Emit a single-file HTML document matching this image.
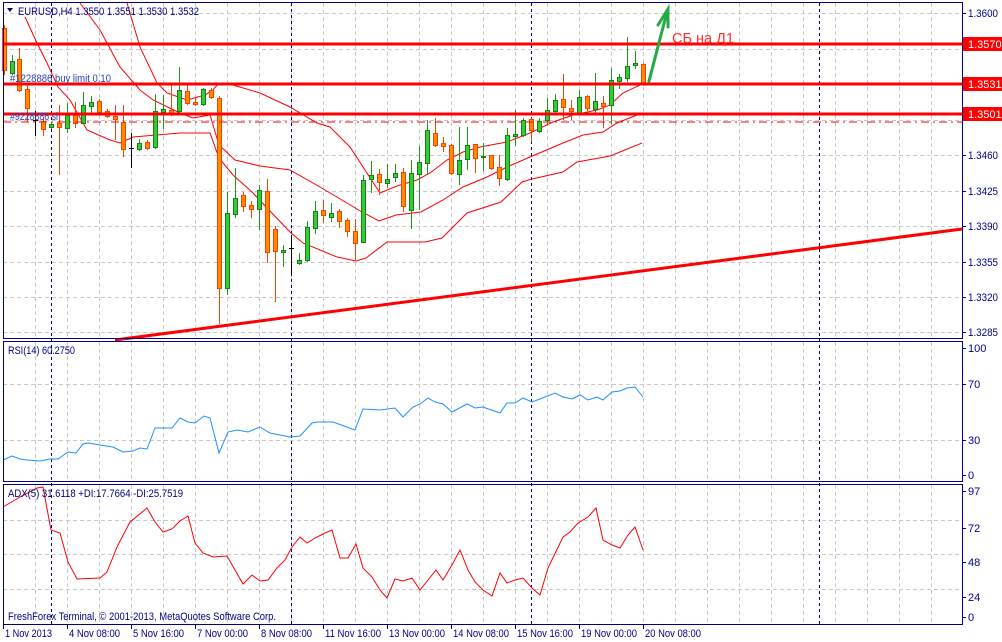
<!DOCTYPE html>
<html><head><meta charset="utf-8"><style>
html,body{margin:0;padding:0;background:#fff;}
svg{display:block;font-family:"Liberation Sans",sans-serif;}
</style></head><body>
<svg id="s" width="1002" height="642" xmlns="http://www.w3.org/2000/svg">
<rect width="1002" height="642" fill="#fff"/>
<g id="grid" stroke="#c8c8c8" stroke-width="1" stroke-dasharray="4,3"></g>
<g id="days" stroke="#000080" stroke-width="1" stroke-dasharray="3,3"></g>
<g fill="none" stroke="#ff0000" stroke-width="1">
<polyline points="127,3 140,47 157,83 167,93 187,100 205,95 213,90 218,84 233,85 260,93 290,107 317,123 330,127 350,147 380,193 397,186 417,180 430,173 447,160 463,152 480,147 507,142 530,133 553,122 573,115 597,110 610,105 623,93 640,85"/>
<polyline points="80,3 100,30 120,67 140,90 153,100 180,113 193,118 210,115 219,145 235,160 260,166 290,170 320,187 362,212 379,221 396,215 421,212 443,200 463,187 487,177 507,167 530,157 563,143 583,135 603,132 617,123 642,113"/>
<polyline points="25,17 37,43 47,63 58,87 70,100 87,130 110,140 120,143 133,137 180,133 210,133 219,158 233,175 252,192 269,210 290,232 303,243 337,257 356,261 366,258 387,242 425,242 442,238 467,213 501,202 522,182 532,179 563,172 577,162 610,156 620,152 642,143"/>
</g>
<g id="candles"></g>
<g stroke="#ff0000" stroke-width="3">
<line x1="3" y1="44" x2="962" y2="44"/>
<line x1="3" y1="84" x2="962" y2="84"/>
<line x1="3" y1="114" x2="962" y2="114"/>
</g>
<line x1="3" y1="122" x2="962" y2="122" stroke="#ff0000" stroke-width="1" stroke-dasharray="8,4,2,4"/>
<line x1="115" y1="340" x2="962" y2="229" stroke="#ff0000" stroke-width="3"/>
<g stroke="#22aa44" stroke-width="3" fill="none" stroke-linecap="round">
<line x1="649" y1="81" x2="667" y2="12"/>
<polyline points="658,25 668,9 668,27"/>
</g>
<text x="672" y="43" font-size="15" fill="#ff3030" textLength="62" lengthAdjust="spacingAndGlyphs">СБ на Д1</text>
<text x="10" y="82" font-size="11" fill="#2a3fc0" textLength="101" lengthAdjust="spacingAndGlyphs">#1228886 buy limit 0.10</text>
<text x="10" y="120" font-size="11" fill="#2a3fc0" textLength="48" lengthAdjust="spacingAndGlyphs">#9228886 sl</text>
<polyline fill="none" stroke="#1e90ff" stroke-width="1" points="3,460 12,456 20,459 27,460 40,461 50,459 58,459 68,452 76,453 83,444 88,443 100,445 113,447 123,452 133,451 140,448 147,449 155,428 163,428 172,428 180,418 188,422 195,423 204,416 210,418 219,453 228,432 237,430 248,432 260,427 270,433 290,437 300,436 312,423 317,422 333,422 355,430 363,409 380,410 395,408 403,417 413,407 420,404 428,398 435,402 443,404 452,412 467,404 475,408 483,407 500,413 507,403 515,403 523,398 532,402 540,399 555,393 563,397 572,399 580,395 588,400 597,397 603,400 612,392 620,391 627,388 635,387 643,397"/>
<polyline fill="none" stroke="#ff0000" stroke-width="1" points="3,507 20,497 37,488 43,487 51,530 60,533 68,562 77,579 100,578 107,572 117,547 130,522 147,508 155,522 163,532 172,529 180,521 188,516 195,543 203,553 213,557 227,556 235,570 243,584 252,575 260,581 268,580 277,568 285,560 292,547 300,537 307,543 315,538 325,533 332,530 340,558 348,558 356,544 363,568 372,577 380,590 387,598 395,579 403,581 412,578 420,590 428,580 436,570 443,580 452,565 460,550 468,570 475,582 483,590 492,596 500,573 507,583 515,580 523,578 532,588 540,595 548,568 563,537 570,532 578,523 588,517 596,508 603,540 612,545 620,548 628,535 635,527 643,550"/>
<g fill="none" stroke="#000080" stroke-width="1">
<rect x="3.5" y="2.5" width="959" height="336"/>
<rect x="3.5" y="341.5" width="959" height="140"/>
<rect x="3.5" y="484.5" width="959" height="140"/>
</g>
<polygon points="7,8 13,8 10,12" fill="#000080"/>
<text x="18" y="15" font-size="11" fill="#000080" textLength="181" lengthAdjust="spacingAndGlyphs">EURUSD,H4  1.3550 1.3551 1.3530 1.3532</text>
<text x="8" y="354" font-size="11" fill="#000080" textLength="67" lengthAdjust="spacingAndGlyphs">RSI(14) 60.2750</text>
<text x="8" y="497" font-size="11" fill="#000080" textLength="175" lengthAdjust="spacingAndGlyphs">ADX(5) 31.6118 +DI:17.7664 -DI:25.7519</text>
<text x="8" y="620" font-size="11" fill="#000080" textLength="268" lengthAdjust="spacingAndGlyphs">FreshForex Terminal, © 2001-2013, MetaQuotes Software Corp.</text>
<g id="axis" font-size="11" fill="#000080"></g>
<g>
<rect x="963" y="37" width="39" height="14" fill="#ff0000"/>
<text x="968" y="48" font-size="11" fill="#fff">1.3570</text>
<rect x="963" y="77" width="39" height="14" fill="#ff0000"/>
<text x="968" y="88" font-size="11" fill="#fff">1.3531</text>
<rect x="963" y="107" width="39" height="14" fill="#ff0000"/>
<text x="968" y="118" font-size="11" fill="#fff">1.3501</text>
</g>
</svg>
<script>
var NS="http://www.w3.org/2000/svg";
function el(p,t,a,txt){var e=document.createElementNS(NS,t);for(var k in a)e.setAttribute(k,a[k]);if(txt)e.textContent=txt;p.appendChild(e);return e;}
var g=document.getElementById('grid');
for(var x=35;x<962;x+=32){el(g,'line',{x1:x+.5,y1:3,x2:x+.5,y2:338});el(g,'line',{x1:x+.5,y1:342,x2:x+.5,y2:481});el(g,'line',{x1:x+.5,y1:485,x2:x+.5,y2:624});}
[13,49,84,120,155,191,226,262,297,332,384,440,520,554,589].forEach(function(y){el(g,'line',{x1:3,y1:y+.5,x2:962,y2:y+.5});});
var d=document.getElementById('days');
[51,291,531,819].forEach(function(x){el(d,'line',{x1:x+.5,y1:3,x2:x+.5,y2:624});});
var C=[[4,28,70,25,75,'o'],[12,61,73,55,75,'g'],[19,59,90,48,92,'o'],[27,89,108,84,122,'o'],[35,120,121,111,136,'k'],[43,121,129,118,136,'o'],[51,124,127,122,129,'g'],[59,123,127,105,175,'o'],[67,115,128,103,133,'g'],[75,115,123,102,128,'o'],[83,105,123,92,123,'g'],[91,102,106,96,113,'g'],[99,101,112,99,114,'o'],[107,111,116,109,118,'o'],[115,116,119,105,140,'o'],[123,122,149,105,157,'o'],[131,148,149,133,168,'k'],[139,143,149,139,151,'g'],[147,142,148,140,150,'o'],[155,111,147,94,149,'g'],[163,109,112,95,129,'g'],[171,110,113,84,116,'o'],[179,90,111,67,115,'g'],[187,91,103,84,105,'o'],[195,102,104,98,106,'o'],[203,89,104,88,106,'g'],[211,90,97,88,99,'o'],[219,98,288,96,324,'o'],[227,213,288,192,295,'g'],[235,198,214,168,218,'g'],[243,195,206,192,212,'o'],[251,205,209,201,218,'o'],[259,190,209,185,230,'g'],[267,191,252,179,263,'o'],[275,229,251,226,302,'o'],[283,250,252,245,267,'g'],[291,248,249,235,275,'k'],[299,260,263,253,265,'g'],[307,227,260,221,262,'g'],[315,211,228,201,234,'g'],[323,210,215,200,223,'o'],[331,213,217,203,222,'g'],[339,211,221,209,228,'o'],[347,220,231,218,237,'o'],[355,231,243,219,260,'o'],[363,180,242,175,243,'g'],[371,175,179,161,193,'g'],[379,174,182,169,195,'o'],[387,179,183,164,188,'g'],[395,173,177,164,182,'g'],[403,172,206,168,212,'o'],[411,173,210,160,229,'g'],[419,162,174,146,210,'g'],[427,130,163,120,175,'g'],[435,133,145,118,147,'o'],[443,143,146,137,152,'o'],[451,145,173,144,175,'o'],[459,160,174,127,185,'g'],[467,145,159,127,170,'g'],[475,144,158,144,173,'o'],[483,156,157,143,171,'g'],[491,155,168,155,170,'o'],[499,167,178,155,186,'o'],[507,135,179,128,181,'g'],[515,134,136,110,146,'g'],[523,120,135,118,137,'g'],[531,119,130,118,142,'o'],[539,121,131,118,133,'g'],[547,110,120,98,124,'g'],[555,100,111,94,114,'g'],[563,99,107,74,120,'o'],[571,108,111,100,120,'o'],[579,97,113,90,115,'g'],[587,96,108,95,111,'o'],[595,101,109,73,114,'g'],[603,103,106,96,128,'o'],[611,80,105,68,124,'g'],[619,77,81,74,89,'g'],[627,66,78,37,82,'g'],[635,63,65,51,69,'g'],[643,64,83,63,84,'o']];
var cg=document.getElementById('candles');
C.forEach(function(c){var x=c[0],t=c[5];
var wc=t=='g'?'#1a9a1a':t=='o'?'#ff4000':'#000';
var fc=t=='g'?'#32cd32':t=='o'?'#ff8c00':'#000';
var bc=t=='g'?'#168016':t=='o'?'#ff4000':'#000';
el(cg,'line',{x1:x+.5,y1:c[3],x2:x+.5,y2:c[4],stroke:wc,'stroke-width':1});
if(t=='k'){el(cg,'line',{x1:x-2,y1:c[1]+.5,x2:x+3,y2:c[1]+.5,stroke:'#000'});}
else el(cg,'rect',{x:x-2+.5,y:c[1]+.5,width:4,height:Math.max(1,c[2]-c[1]),fill:fc,stroke:bc,'stroke-width':1});
});
var a=document.getElementById('axis');
[['1.3600',13],['1.3460',155],['1.3425',191],['1.3390',226],['1.3355',262],['1.3320',297],['1.3285',332],['100',348],['70',384],['30',440],['0',475],['97',491],['72',528],['48',562],['24',597],['0',617]].forEach(function(p){
el(a,'line',{x1:962,y1:p[1]+.5,x2:966,y2:p[1]+.5,stroke:'#000080'});
var t=el(a,'text',{x:968,y:p[1]+4},p[0]);
if(p[0].length==6){t.setAttribute('textLength','30');t.setAttribute('lengthAdjust','spacingAndGlyphs');}});
[['1 Nov 2013',3,47],['4 Nov 08:00',67,51],['5 Nov 16:00',131,51],['7 Nov 00:00',195,51],['8 Nov 08:00',259,51],['11 Nov 16:00',323,56],['13 Nov 00:00',387,56],['14 Nov 08:00',451,56],['15 Nov 16:00',515,56],['19 Nov 00:00',579,56],['20 Nov 08:00',643,56]].forEach(function(p){
el(a,'line',{x1:p[1]+.5,y1:625,x2:p[1]+.5,y2:629,stroke:'#000080'});
el(a,'text',{x:p[1]+2,y:637,textLength:p[2],lengthAdjust:'spacingAndGlyphs'},p[0]);});
</script>
</body></html>
